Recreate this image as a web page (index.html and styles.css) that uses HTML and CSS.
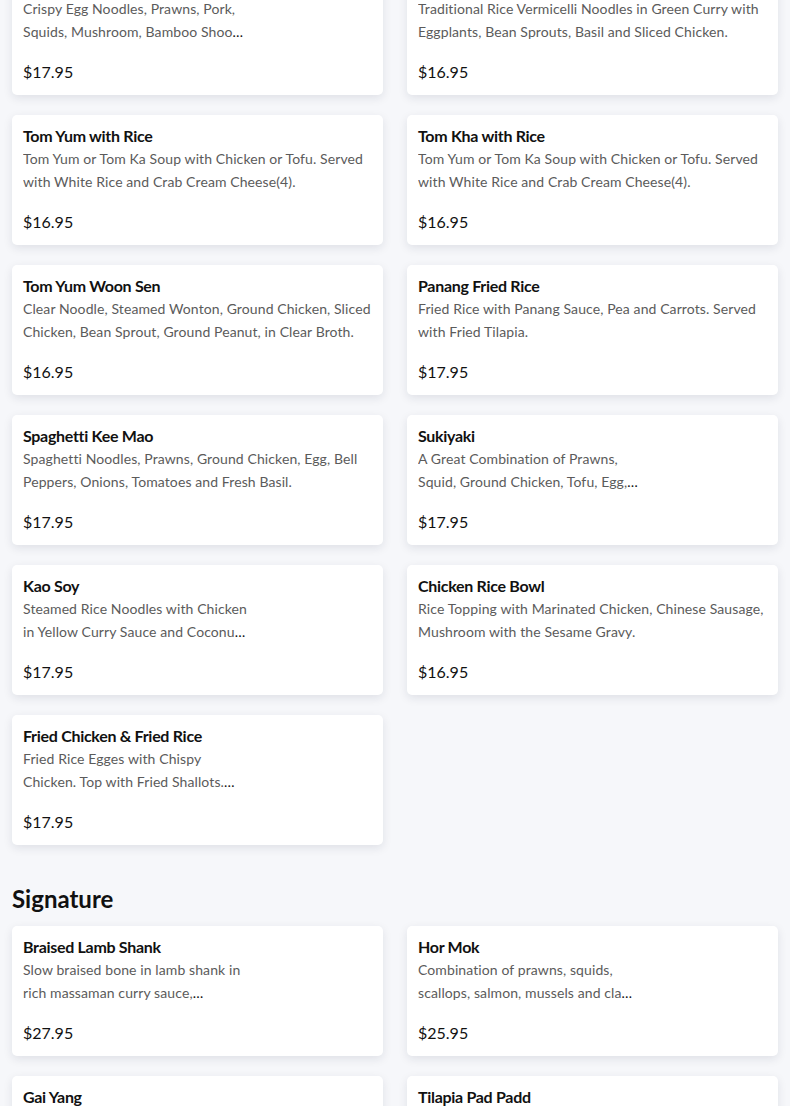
FILE: index.html
```html
<!DOCTYPE html>
<html lang="en">
<head>
<meta charset="utf-8">
<title>Menu</title>
<link rel="stylesheet" href="styles.css">
</head>
<body>
<main class="menu">
  <section class="section first">
    <div class="grid">
      <article class="card has-img">
        <h3 class="title">Rad Na Mee Krob</h3>
        <p class="desc"><span>Crispy Egg Noodles, Prawns, Pork, Squids, Mushroom, Bamboo Shoots, Carrots and Broccoli in Gravy Sauce.</span></p>
        <div class="price">$17.95</div>
      </article>
      <article class="card">
        <h3 class="title">Kanom Jeen Green Curry</h3>
        <p class="desc"><span>Traditional Rice Vermicelli Noodles in Green Curry with Eggplants, Bean Sprouts, Basil and Sliced Chicken.</span></p>
        <div class="price">$16.95</div>
      </article>
      <article class="card">
        <h3 class="title">Tom Yum with Rice</h3>
        <p class="desc"><span>Tom Yum or Tom Ka Soup with Chicken or Tofu. Served with White Rice and Crab Cream Cheese(4).</span></p>
        <div class="price">$16.95</div>
      </article>
      <article class="card">
        <h3 class="title">Tom Kha with Rice</h3>
        <p class="desc"><span>Tom Yum or Tom Ka Soup with Chicken or Tofu. Served with White Rice and Crab Cream Cheese(4).</span></p>
        <div class="price">$16.95</div>
      </article>
      <article class="card">
        <h3 class="title">Tom Yum Woon Sen</h3>
        <p class="desc"><span>Clear Noodle, Steamed Wonton, Ground Chicken, Sliced Chicken, Bean Sprout, Ground Peanut, in Clear Broth.</span></p>
        <div class="price">$16.95</div>
      </article>
      <article class="card">
        <h3 class="title">Panang Fried Rice</h3>
        <p class="desc"><span>Fried Rice with Panang Sauce, Pea and Carrots. Served with Fried Tilapia.</span></p>
        <div class="price">$17.95</div>
      </article>
      <article class="card">
        <h3 class="title">Spaghetti Kee Mao</h3>
        <p class="desc"><span>Spaghetti Noodles, Prawns, Ground Chicken, Egg, Bell Peppers, Onions, Tomatoes and Fresh Basil.</span></p>
        <div class="price">$17.95</div>
      </article>
      <article class="card has-img">
        <h3 class="title">Sukiyaki</h3>
        <p class="desc"><span>A Great Combination of Prawns, Squid, Ground Chicken, Tofu, Egg, Glass Noodles and Vegetables in Sukiyaki Sauce.</span></p>
        <div class="price">$17.95</div>
      </article>
      <article class="card has-img">
        <h3 class="title">Kao Soy</h3>
        <p class="desc"><span>Steamed Rice Noodles with Chicken in Yellow Curry Sauce and Coconut Milk, Topped with Crispy Noodles.</span></p>
        <div class="price">$17.95</div>
      </article>
      <article class="card">
        <h3 class="title">Chicken Rice Bowl</h3>
        <p class="desc"><span>Rice Topping with Marinated Chicken, Chinese Sausage, Mushroom with the Sesame Gravy.</span></p>
        <div class="price">$16.95</div>
      </article>
      <article class="card has-img">
        <h3 class="title">Fried Chicken &amp; Fried Rice</h3>
        <p class="desc"><span>Fried Rice Egges with Chispy Chicken. Top with Fried Shallots. Served with Sweet Chili Sauce.</span></p>
        <div class="price">$17.95</div>
      </article>
    </div>
  </section>

  <section class="section">
    <h2 class="section-title">Signature</h2>
    <div class="grid">
      <article class="card has-img">
        <h3 class="title">Braised Lamb Shank</h3>
        <p class="desc"><span>Slow braised bone in lamb shank in rich massaman curry sauce, potatoes, onions and peanuts.</span></p>
        <div class="price">$27.95</div>
      </article>
      <article class="card has-img">
        <h3 class="title">Hor Mok</h3>
        <p class="desc"><span>Combination of prawns, squids, scallops, salmon, mussels and clams steamed in red curry custard.</span></p>
        <div class="price">$25.95</div>
      </article>
      <article class="card has-img">
        <h3 class="title">Gai Yang</h3>
        <p class="desc"><span>Grilled marinated half chicken served with sticky rice and spicy tamarind sauce.</span></p>
        <div class="price">$21.95</div>
      </article>
      <article class="card has-img">
        <h3 class="title">Tilapia Pad Padd</h3>
        <p class="desc"><span>Crispy whole tilapia stir-fried with red curry paste, young peppercorn and krachai.</span></p>
        <div class="price">$24.95</div>
      </article>
    </div>
  </section>
</main>
</body>
</html>
```

FILE: styles.css
```css
* {
  box-sizing: border-box;
}

html, body {
  margin: 0;
  padding: 0;
}

body {
  background: #f6f7fa;
  font-family: Lato, "Noto Sans", "Liberation Sans", sans-serif;
  color: #111;
  overflow: hidden;
}

.menu {
  padding: 0 12px;
}

.section {
  margin-top: 39px;
}

.section.first {
  margin-top: -35px;
}

.section-title {
  margin: 0 0 13px;
  font-size: 24px;
  line-height: 29px;
  font-weight: 700;
  color: #111;
}

.grid {
  display: grid;
  grid-template-columns: 1fr 1fr;
  column-gap: 24px;
  row-gap: 20px;
}

.card {
  height: 130px;
  background: #fff;
  border-radius: 5px;
  box-shadow: 0 3px 10px rgba(20, 30, 60, 0.10);
  padding: 11px 11px 14px;
  display: flex;
  flex-direction: column;
}

.title {
  margin: 0;
  font-size: 16px;
  line-height: 19px;
  font-weight: 700;
  color: #111;
  letter-spacing: -0.3px;
}

.desc {
  margin: 2px 0 0;
  font-size: 14px;
  line-height: 23px;
  letter-spacing: 0.1px;
  color: #111;
  display: -webkit-box;
  -webkit-box-orient: vertical;
  -webkit-line-clamp: 2;
  overflow: hidden;
}

.desc span {
  color: #5b5b5b;
}

.has-img .desc {
  max-width: 225px;
}

.price {
  margin-top: auto;
  font-size: 16px;
  line-height: 19px;
  color: #111;
}
```
